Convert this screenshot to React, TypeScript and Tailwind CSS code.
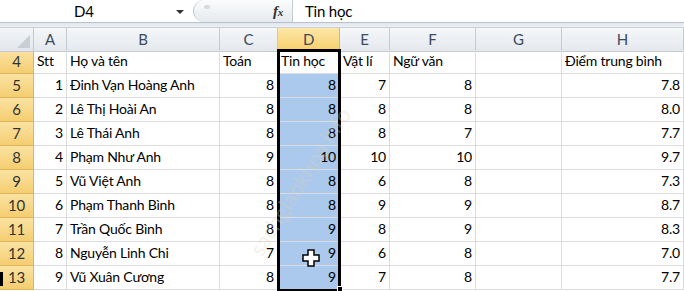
import clsx from "clsx";

const cols = ["A", "B", "C", "D", "E", "F", "G", "H"];

type Row = {
  n: number;
  cells: (string | number)[];
};

const rows: Row[] = [
  { n: 5, cells: [1, "Đinh Vạn Hoàng Anh", 8, 8, 7, 8, "", "7.8"] },
  { n: 6, cells: [2, "Lê Thị Hoài An", 8, 8, 8, 8, "", "8.0"] },
  { n: 7, cells: [3, "Lê Thái Anh", 8, 8, 8, 7, "", "7.7"] },
  { n: 8, cells: [4, "Phạm Như Anh", 9, 10, 10, 10, "", "9.7"] },
  { n: 9, cells: [5, "Vũ Việt Anh", 8, 8, 6, 8, "", "7.3"] },
  { n: 10, cells: [6, "Phạm Thanh Bình", 8, 8, 9, 9, "", "8.7"] },
  { n: 11, cells: [7, "Trần Quốc Bình", 8, 9, 8, 9, "", "8.3"] },
  { n: 12, cells: [8, "Nguyễn Linh Chi", 7, 9, 6, 8, "", "7.0"] },
  { n: 13, cells: [9, "Vũ Xuân Cương", 8, 9, 7, 8, "", "7.7"] },
];

const head = ["Stt", "Họ và tên", "Toán", "Tin học", "Vật lí", "Ngữ văn", "", "Điểm trung bình"];

const grid =
  "grid grid-cols-[34px_33px_153px_58px_62px_50px_86px_86px_1fr]";

function RowHeader({ n }: { n: number }) {
  return (
    <div className="h-6 flex items-center justify-center bg-gradient-to-b from-[#fbe3a3] to-[#f5cd6f] border-r border-b border-[#e0b45a] text-[#333] text-[15px]">
      {n}
    </div>
  );
}

function Cell({ value, col }: { value: string | number; col: number }) {
  const num = typeof value === "number" || /^\d/.test(String(value));
  return (
    <div
      className={clsx(
        "h-6 flex items-end pb-[2px] px-[3px] border-r border-b border-[#dadcdf] whitespace-nowrap",
        num ? "justify-end" : "justify-start",
        col === 3 && "bg-[#aac9ec] border-[#c7dcf3]"
      )}
    >
      {value}
    </div>
  );
}

export default function App() {
  return (
    <div
      className="relative w-[684px] h-[291px] overflow-hidden bg-white text-[14px] tracking-[-0.2px] text-black"
      style={{ fontFamily: "Lato, 'Open Sans', sans-serif" }}
    >
      {/* formula bar */}
      <div className="h-[23px] flex items-stretch border-b border-[#b9c3cf] bg-white">
        <div className="w-[193px] relative flex items-center text-[15px]">
          <span className="ml-[74px]">D4</span>
          <span className="absolute left-[176px] top-[10px] w-0 h-0 border-l-[4px] border-r-[4px] border-t-[4px] border-l-transparent border-r-transparent border-t-[#333]" />
        </div>
        <div className="w-[99px] flex items-center justify-end pr-[9px] rounded-l-full bg-gradient-to-b from-[#fbfcfd] to-[#e6eaee] border-l border-[#c5ccd4] relative">
          <span className="absolute left-[10px] top-[5px] w-[6px] h-[4px] rounded-full bg-[#d6dbe0]" />
          <span
            className="italic font-bold text-[15px] text-[#333]"
            style={{ fontFamily: "'Liberation Serif', serif" }}
          >
            f<span className="text-[11px]">x</span>
          </span>
        </div>
        <div className="flex-1 flex items-center pl-[12px] border-l border-[#c5ccd4] text-[15px]">
          Tin học
        </div>
      </div>
      <div className="h-[5px] bg-gradient-to-b from-[#dfe5ec] to-[#eef1f4] border-b border-[#c9d0d8]" />

      {/* column headers */}
      <div className={clsx(grid, "h-[22px] text-[#3c4b60] text-[15px]")}>
        <div className="relative border-r border-b border-[#c4cad2] bg-gradient-to-b from-[#f3f5f7] to-[#e3e7ec]">
          <svg className="absolute right-[3px] bottom-[3px]" width="13" height="13" viewBox="0 0 13 13">
            <path d="M13 0V13H0z" fill="#c9ced4" />
          </svg>
        </div>
        {cols.map((c) => (
          <div
            key={c}
            className={clsx(
              "flex items-center justify-center border-r border-b",
              c === "D"
                ? "bg-gradient-to-b from-[#fde7a6] to-[#f7cf6a] border-[#e0b45a]"
                : "bg-gradient-to-b from-[#f5f7f9] to-[#e4e8ed] border-[#c4cad2]"
            )}
          >
            {c}
          </div>
        ))}
      </div>

      {/* header row 4 */}
      <div className={grid}>
        <RowHeader n={4} />
        {head.map((h, i) => (
          <div
            key={i}
            className="h-6 flex items-end pb-[2px] px-[3px] border-r border-b border-[#dadcdf] whitespace-nowrap"
          >
            {h}
          </div>
        ))}
      </div>

      {rows.map((r) => (
        <div key={r.n} className={grid}>
          <RowHeader n={r.n} />
          {r.cells.map((v, i) => (
            <Cell key={i} value={v} col={i} />
          ))}
        </div>
      ))}

      {/* selection outline D4:D13 */}
      <div className="absolute left-[277px] top-[49px] w-[64px] h-[243px] border-[3px] border-black pointer-events-none" />
      <div className="absolute left-[337px] top-[286px] w-[6px] h-[6px] bg-black border border-white" />

      {/* cursor */}
      <svg className="absolute left-[302px] top-[249px]" width="18" height="18" viewBox="0 0 18 18">
        <path d="M6 1h6v5h5v6h-5v5H6v-5H1V6h5z" fill="#fff" stroke="#000" strokeWidth="1.5" />
      </svg>

      {/* left artifact */}
      <div className="absolute left-0 top-[272px] w-[3px] h-[14px] bg-black" />

      {/* watermark */}
      <div className="absolute left-[215px] top-[165px] -rotate-[58deg] text-[22px] text-[#e2d3bc] opacity-30 whitespace-nowrap pointer-events-none">
        sachgiaokhoa.info
      </div>
    </div>
  );
}
